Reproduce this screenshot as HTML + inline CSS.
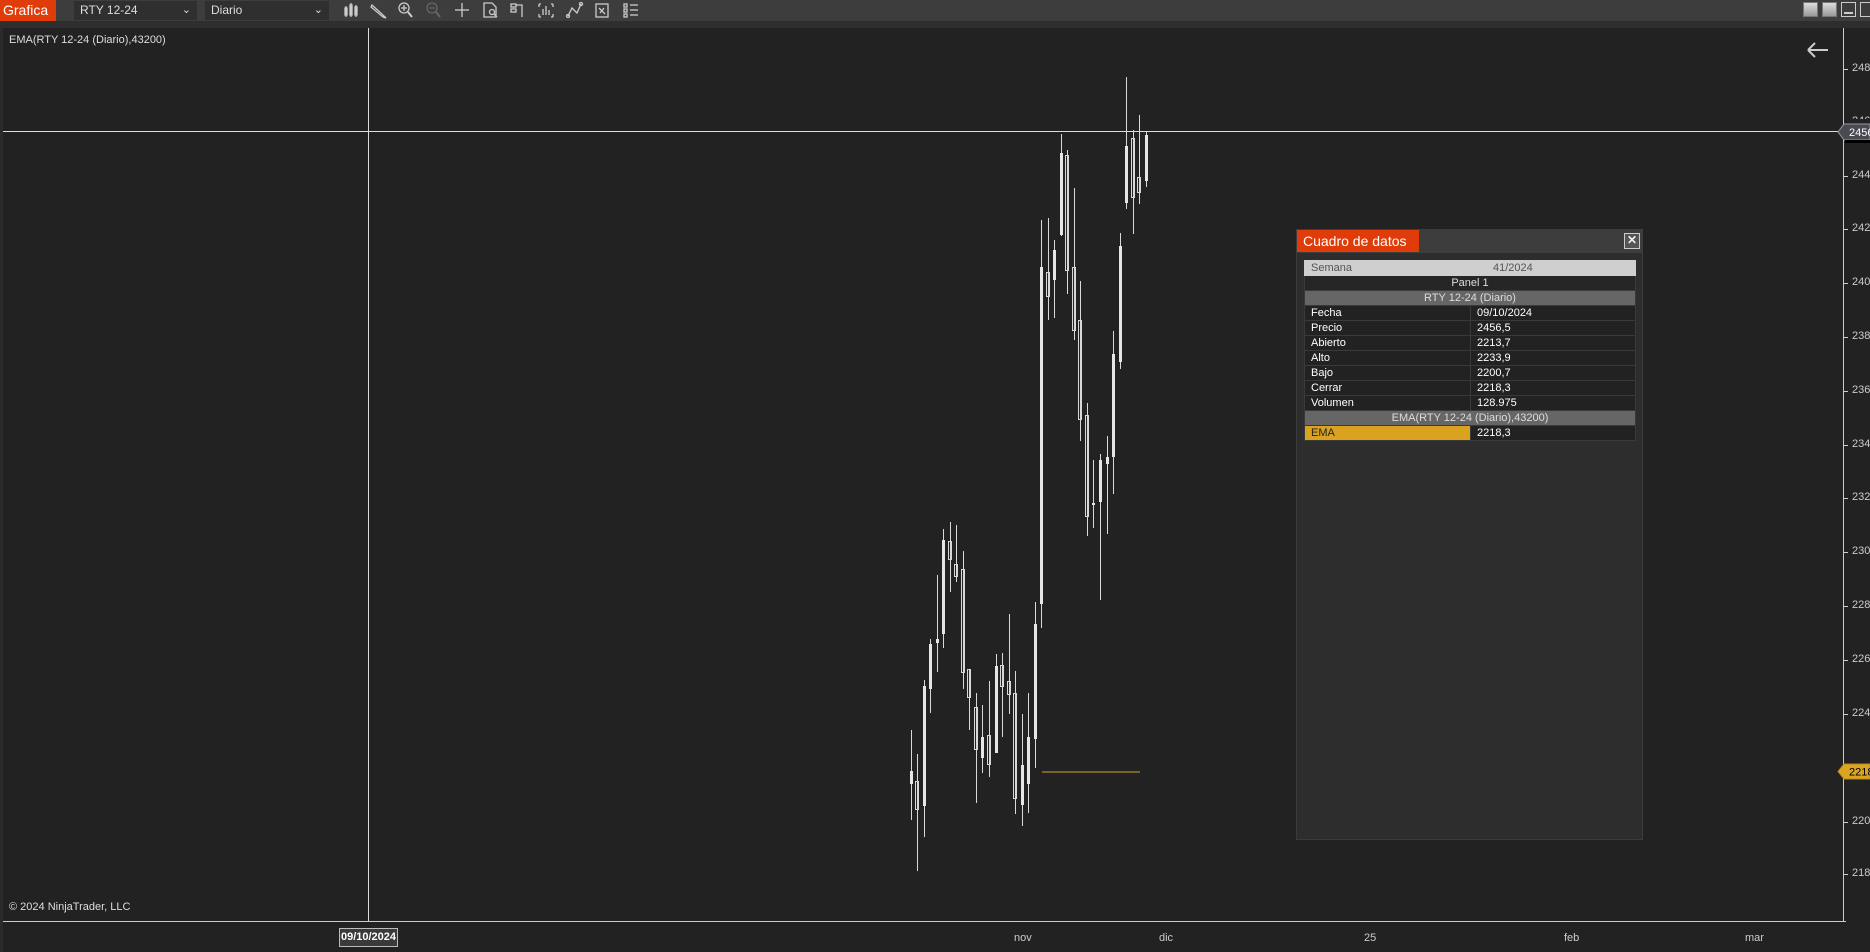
<!DOCTYPE html>
<html><head><meta charset="utf-8">
<style>
*{margin:0;padding:0;box-sizing:border-box}
body{width:1870px;height:952px;background:#2b2b2b;overflow:hidden;position:relative;font-family:"Liberation Sans",Arial,sans-serif;color:#ddd}
.tb{position:absolute;left:0;top:0;width:1870px;height:21px;background:#3d3d3d}
.strip{position:absolute;left:0;top:21px;width:1870px;height:7px;background:#2e2e2e}
.graf{position:absolute;left:0;top:0;width:56px;height:21px;background:#e03c0a;color:#fff;font-size:14px;line-height:20px;padding-left:3px}
.dd{position:absolute;top:1px;height:19px;background:#2f2f2f;color:#ddd;font-size:12px;line-height:19px;padding-left:6px}
.dd span{position:absolute;right:6px;top:0;font-size:11px}
.chart{position:absolute;left:3px;top:28px;width:1867px;height:924px;background:#222}
.lbl{position:absolute;font-size:11px;color:#ddd}
.ax{position:absolute;left:1852px;font-size:11px;color:#ccc;white-space:nowrap}
.tk{position:absolute;left:1843px;width:5px;height:1px;background:#ccc}
.bx{position:absolute;font-size:11px;color:#ccc}
.panel{position:absolute;left:1296px;top:229px;width:347px;height:611px;background:#2d2d2d;border:1px solid #3c3c3c}
.ph{position:absolute;left:0;top:0;width:345px;height:23px;background:#3d3d3d}
.pt{position:absolute;left:0;top:0;width:122px;height:22px;background:#e03c0a;color:#fff;font-size:14px;line-height:22px;padding-left:6px}
.cl{position:absolute;left:327px;top:3px;width:16px;height:16px;border:1px solid #ccc;background:#555;color:#eee;font-size:12px;line-height:13px;text-align:center;font-weight:bold}
table{position:absolute;left:7px;top:30px;width:332px;border-collapse:collapse;font-size:11px}
td{height:15px;line-height:14px;border:1px solid #3a3a3a;padding:0 6px;color:#fff;background:#222}
</style></head><body>
<div class="tb"></div>
<div class="strip"></div>
<div class="graf">Grafica</div>
<div class="dd" style="left:74px;width:123px">RTY 12-24<span>&#8964;</span></div>
<div class="dd" style="left:205px;width:124px">Diario<span>&#8964;</span></div>
<svg style="position:absolute;left:0;top:0" width="700" height="21" stroke="#ccc" fill="none" stroke-width="1.3">
 <g><line x1="346" y1="6" x2="346" y2="17"/><rect x="345" y="8" width="2" height="7" fill="#ccc"/><line x1="351" y1="3" x2="351" y2="17"/><rect x="350" y="5" width="2" height="10" fill="#ccc"/><line x1="356" y1="5" x2="356" y2="17"/><rect x="355" y="7" width="2" height="8" fill="#ccc"/></g>
 <g><path d="M372 5 L384 16 L386 18 L383 17 L371 7 Z"/></g>
 <g><circle cx="404" cy="8" r="5"/><line x1="408" y1="12" x2="412" y2="17" stroke-width="2"/><line x1="401" y1="8" x2="407" y2="8"/><line x1="404" y1="5" x2="404" y2="11"/></g>
 <g stroke="#666"><circle cx="432" cy="8" r="5"/><line x1="436" y1="12" x2="440" y2="17" stroke-width="2"/><line x1="429" y1="8" x2="435" y2="8"/></g>
 <g><line x1="455" y1="10" x2="469" y2="10"/><line x1="462" y1="3" x2="462" y2="17"/></g>
 <g><path d="M484 3 H492 L496 7 V17 H484 Z"/><circle cx="492" cy="12" r="2.5"/><line x1="494" y1="14" x2="497" y2="17"/></g>
 <g><rect x="511" y="4" width="5" height="3"/><rect x="511" y="9" width="5" height="3"/><path d="M516 5 H522 V17"/></g>
 <g><path d="M539 4 H541 M539 4 V7 M553 4 H551 M553 4 V7 M539 17 H541 M539 17 V14 M553 17 V14 M553 17 H551"/><line x1="543" y1="9" x2="543" y2="15"/><line x1="546" y1="6" x2="546" y2="15"/><line x1="549" y1="10" x2="549" y2="15"/></g>
 <g><path d="M568 16 L572 8 L577 13 L581 4"/><circle cx="568" cy="16" r="1.5"/><circle cx="581" cy="4" r="1.5"/></g>
 <g><rect x="596" y="4" width="12" height="13"/><path d="M599 8 L605 14 M604 8 L600 13"/></g>
 <g><rect x="624" y="4" width="3" height="3"/><rect x="624" y="9" width="3" height="3"/><rect x="624" y="14" width="3" height="3"/><line x1="630" y1="5" x2="638" y2="5"/><line x1="630" y1="10" x2="638" y2="10"/><line x1="630" y1="15" x2="638" y2="15"/></g>
</svg>
<div style="position:absolute;left:1803px;top:2px;width:15px;height:15px;background:linear-gradient(#ddd,#999);border:1px solid #777"></div>
<div style="position:absolute;left:1822px;top:2px;width:15px;height:15px;background:linear-gradient(#ddd,#999);border:1px solid #777"></div>
<div style="position:absolute;left:1841px;top:2px;width:15px;height:15px;border:1px solid #ccc"><div style="position:absolute;left:2px;bottom:2px;width:9px;height:2px;background:#ccc"></div></div>
<div style="position:absolute;left:1860px;top:2px;width:10px;height:15px;border:1px solid #ccc;border-right:none"></div>

<div class="chart"></div>
<div style="position:absolute;left:3px;top:921px;width:1843px;height:1px;background:#ccc"></div>
<div style="position:absolute;left:1843px;top:28px;width:1px;height:894px;background:#ccc"></div>
<div style="position:absolute;left:3px;top:131px;width:1840px;height:1px;background:#ddd"></div>
<div style="position:absolute;left:368px;top:28px;width:1px;height:893px;background:#ddd"></div>

<svg style="position:absolute;left:0;top:0" width="1870" height="952">
<g id="c" stroke="#d8d8d8" stroke-width="1" fill="none"></g>
<line x1="1042" y1="772" x2="1140" y2="772" stroke="#7a6224" stroke-width="2"/>
<path d="M1808 50 H1828 M1808 50 L1815 43 M1808 50 L1815 57" stroke="#ccc" stroke-width="2" fill="none"/>
</svg>
<script>
var d=[[911,730,820,771,784,1],[917,754,871,781,809,0],[924,680,837,686,806,1],[930,639,713,644,689,1],[937,575,672,639,643,1],[943,529,648,540,634,1],[950,522,592,541,559,0],[956,525,582,564,576,0],[963,551,689,569,672,0],[969,669,730,669,697,0],[976,693,803,707,749,0],[982,705,773,737,758,1],[989,681,777,735,764,0],[996,654,753,666,753,1],[1002,653,737,665,686,0],[1009,614,714,681,694,0],[1015,671,814,693,798,0],[1022,714,826,765,805,1],[1028,693,813,737,784,1],[1035,602,768,624,739,1],[1041,220,628,267,604,1],[1048,218,320,272,296,0],[1054,240,318,250,280,1],[1061,134,236,153,235,1],[1067,150,294,155,270,0],[1074,188,340,267,330,0],[1080,281,441,320,419,0],[1087,403,536,415,516,0],[1093,460,528,503,505,1],[1100,454,600,460,502,1],[1107,436,534,457,464,1],[1113,331,494,354,457,1],[1120,233,369,246,362,1],[1126,77,209,146,203,1],[1133,130,234,138,197,0],[1139,115,204,177,192,0],[1146,132,187,135,181,1]];
var s='';d.forEach(function(c){var x=c[0]+.5;s+='<line x1="'+x+'" y1="'+c[1]+'" x2="'+x+'" y2="'+c[2]+'"/>';
if(c[5])s+='<rect x="'+(c[0]-1)+'" y="'+c[3]+'" width="3" height="'+(c[4]-c[3])+'" fill="#e6e6e6" stroke="none"/>';
else s+='<rect x="'+(c[0]-1.5)+'" y="'+(c[3]+.5)+'" width="3" height="'+(c[4]-c[3])+'"/>';});
document.getElementById('c').innerHTML=s;
</script>

<div class="lbl" style="left:9px;top:34px">EMA(RTY 12-24 (Diario),43200)</div>
<div class="lbl" style="left:9px;top:901px">© 2024 NinjaTrader, LLC</div>

<div class="tk" style="top:69px"></div><div class="ax" style="top:62px">2480</div>
<div class="ax" style="top:115px;clip-path:inset(0 0 8px 0)">2460</div>
<div class="tk" style="top:176px"></div><div class="ax" style="top:169px">2440</div>
<div class="tk" style="top:229px"></div><div class="ax" style="top:222px">2420</div>
<div class="tk" style="top:283px"></div><div class="ax" style="top:276px">2400</div>
<div class="tk" style="top:337px"></div><div class="ax" style="top:330px">2380</div>
<div class="tk" style="top:391px"></div><div class="ax" style="top:384px">2360</div>
<div class="tk" style="top:445px"></div><div class="ax" style="top:438px">2340</div>
<div class="tk" style="top:498px"></div><div class="ax" style="top:491px">2320</div>
<div class="tk" style="top:552px"></div><div class="ax" style="top:545px">2300</div>
<div class="tk" style="top:606px"></div><div class="ax" style="top:599px">2280</div>
<div class="tk" style="top:660px"></div><div class="ax" style="top:653px">2260</div>
<div class="tk" style="top:714px"></div><div class="ax" style="top:707px">2240</div>
<div class="tk" style="top:822px"></div><div class="ax" style="top:815px">2200</div>
<div class="tk" style="top:874px"></div><div class="ax" style="top:867px">2180</div>
<svg style="position:absolute;left:1836px;top:122px" width="34" height="22"><path d="M8 2 H34 V18 H8 L2 10 Z" fill="#4a4a52" stroke="#999"/><rect x="9" y="18" width="25" height="3" fill="#000"/><text x="13" y="14" font-size="11" fill="#fff" font-family="Liberation Sans">2456,5</text></svg>
<svg style="position:absolute;left:1836px;top:763px" width="34" height="18"><path d="M8 1 H34 V16 H8 L2 8.5 Z" fill="#dba523" stroke="#b88a1a"/><text x="13" y="12.5" font-size="11" fill="#000" font-family="Liberation Sans">2218,3</text></svg>

<div style="position:absolute;left:339px;top:928px;width:59px;height:19px;background:#3a3a3a;border:1px solid #bbb;color:#fff;font-size:11px;line-height:17px;text-align:center;font-weight:bold">09/10/2024</div>
<div class="bx" style="left:1014px;top:932px">nov</div>
<div class="bx" style="left:1159px;top:932px">dic</div>
<div class="bx" style="left:1364px;top:932px">25</div>
<div class="bx" style="left:1564px;top:932px">feb</div>
<div class="bx" style="left:1745px;top:932px">mar</div>

<div class="panel">
 <div class="ph"></div>
 <div class="pt">Cuadro de datos</div>
 <div class="cl">✕</div>
 <table>
  <tr><td style="background:#cfcfcf;color:#555;width:166px;border-color:#cfcfcf">Semana</td><td style="background:#cfcfcf;color:#555;border-color:#cfcfcf;padding-left:22px">41/2024</td></tr>
  <tr><td colspan="2" style="text-align:center;color:#ddd;background:#262626">Panel 1</td></tr>
  <tr><td colspan="2" style="text-align:center;background:#666;color:#ddd">RTY 12-24 (Diario)</td></tr>
  <tr><td>Fecha</td><td>09/10/2024</td></tr>
  <tr><td>Precio</td><td>2456,5</td></tr>
  <tr><td>Abierto</td><td>2213,7</td></tr>
  <tr><td>Alto</td><td>2233,9</td></tr>
  <tr><td>Bajo</td><td>2200,7</td></tr>
  <tr><td>Cerrar</td><td>2218,3</td></tr>
  <tr><td>Volumen</td><td>128.975</td></tr>
  <tr><td colspan="2" style="text-align:center;background:#666;color:#ddd">EMA(RTY 12-24 (Diario),43200)</td></tr>
  <tr><td style="background:#d9a320;color:#222">EMA</td><td>2218,3</td></tr>
 </table>
</div>
</body></html>
